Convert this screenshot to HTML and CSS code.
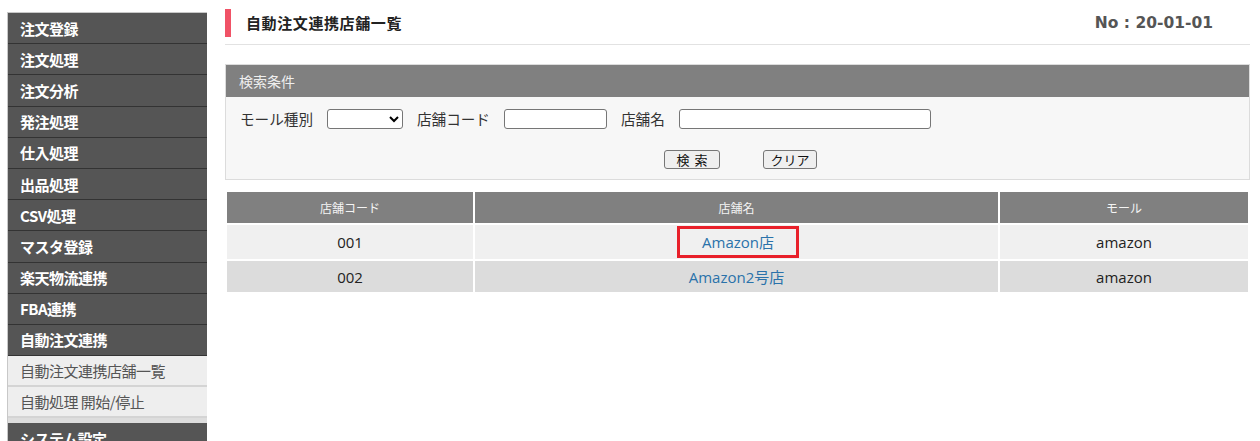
FILE: index.html
```html
<!DOCTYPE html>
<html lang="ja">
<head>
<meta charset="utf-8">
<title>自動注文連携店舗一覧</title>
<link rel="stylesheet" href="styles.css">
</head>
<body>
<div class="page">
  <nav class="sidebar">
    <div class="nav-item">注文登録</div>
    <div class="nav-item">注文処理</div>
    <div class="nav-item">注文分析</div>
    <div class="nav-item">発注処理</div>
    <div class="nav-item">仕入処理</div>
    <div class="nav-item">出品処理</div>
    <div class="nav-item">CSV処理</div>
    <div class="nav-item">マスタ登録</div>
    <div class="nav-item">楽天物流連携</div>
    <div class="nav-item">FBA連携</div>
    <div class="nav-item">自動注文連携</div>
    <div class="nav-sub">
      <div class="sub-item">自動注文連携店舗一覧</div>
      <div class="sub-item">自動処理 開始/停止</div>
    </div>
    <div class="nav-item">システム設定</div>
  </nav>

  <main class="main">
    <header class="page-head">
      <h1 class="page-title">自動注文連携店舗一覧</h1>
      <div class="page-no">No : 20-01-01</div>
    </header>

    <section class="search">
      <div class="search-head">検索条件</div>
      <div class="search-body">
        <div class="search-row">
          <label class="field-label">モール種別</label>
          <select class="mall-select"><option></option></select>
          <label class="field-label">店舗コード</label>
          <input class="text-input code-input" type="text">
          <label class="field-label">店舗名</label>
          <input class="text-input name-input" type="text">
        </div>
        <div class="button-row">
          <button class="btn btn-search">検 索</button>
          <button class="btn">クリア</button>
        </div>
      </div>
    </section>

    <table class="shop-table">
      <thead>
        <tr>
          <th class="col-code">店舗コード</th>
          <th class="col-name">店舗名</th>
          <th class="col-mall">モール</th>
        </tr>
      </thead>
      <tbody>
        <tr class="row-odd">
          <td>001</td>
          <td><a class="shop-link highlight" href="#">Amazon店</a></td>
          <td>amazon</td>
        </tr>
        <tr class="row-even">
          <td>002</td>
          <td><a class="shop-link" href="#">Amazon2号店</a></td>
          <td>amazon</td>
        </tr>
      </tbody>
    </table>
  </main>
</div>
</body>
</html>
```

FILE: styles.css
```css
* { box-sizing: border-box; }

html, body {
  margin: 0;
  padding: 0;
  background: #fff;
  font-family: "Open Sans", "Noto Sans CJK JP", sans-serif;
  color: #333;
}

.page {
  display: flex;
  align-items: flex-start;
  width: 1260px;
  height: 441px;
  overflow: hidden;
}

/* ---- side menu ---- */
.sidebar {
  width: 200px;
  margin: 12px 0 0 7px;
  flex: none;
  border-top: 1px solid #c8c8c8;
  border-left: 1px solid #c8c8c8;
}

.nav-item {
  height: 31.2px;
  padding-left: 12px;
  display: flex;
  align-items: center;
  background: #555;
  border-bottom: 1px solid #333;
  color: #fff;
  font-family: "Noto Sans CJK JP", sans-serif;
  font-weight: 700;
  font-size: 15px;
  letter-spacing: -0.5px;
}

.nav-sub {
  background: #ddd;
  padding-bottom: 5px;
}

.sub-item {
  height: 31px;
  padding-left: 12px;
  display: flex;
  align-items: center;
  background: #eee;
  border-bottom: 2px solid #d4d4d4;
  color: #555;
  font-family: "Noto Sans CJK JP", sans-serif;
  font-size: 15px;
  letter-spacing: -0.5px;
}

/* ---- main area ---- */
.main {
  margin-left: 18px;
  width: 1025px;
  flex: none;
}

.page-head {
  display: flex;
  align-items: center;
  justify-content: space-between;
  height: 45px;
  padding-top: 1px;
  border-bottom: 1px solid #e2e2e2;
}

.page-title {
  margin: 0;
  height: 28px;
  display: flex;
  align-items: center;
  border-left: 6px solid #f05266;
  padding-left: 15px;
  font-family: "Noto Sans CJK JP", sans-serif;
  font-size: 15px;
  font-weight: 700;
  color: #222;
  letter-spacing: 0.6px;
}

.page-no {
  margin-right: 37px;
  font-family: "DejaVu Sans", sans-serif;
  font-weight: 700;
  font-size: 15.5px;
  color: #555;
}

/* ---- search conditions ---- */
.search {
  margin-top: 19px;
  border: 1px solid #dcdcdc;
  background: #f7f7f7;
}

.search-head {
  height: 32px;
  padding-left: 13px;
  display: flex;
  align-items: center;
  background: #808080;
  color: #eee;
  font-family: "Noto Sans CJK JP", sans-serif;
  font-size: 14px;
}

.search-body {
  height: 82px;
  padding: 11px 0 0 14px;
}

.search-row {
  display: flex;
  align-items: center;
  gap: 14px;
  height: 21px;
}

.field-label {
  font-family: "Noto Sans CJK JP", sans-serif;
  font-size: 14.6px;
  color: #333;
}

.mall-select {
  width: 76px;
  height: 20px;
  border: 1px solid #767676;
  border-radius: 3px;
  background: #fff;
  font-size: 13px;
}

.text-input {
  height: 20px;
  border: 1px solid #767676;
  border-radius: 3px;
  background: #fff;
  padding: 0 3px;
}

.code-input { width: 103px; }
.name-input { width: 252px; }

.button-row {
  display: flex;
  justify-content: center;
  gap: 43px;
  margin-top: 21px;
  padding-right: 8px;
}

.btn {
  height: 19px;
  padding: 0 6px;
  border: 1px solid #767676;
  border-radius: 3px;
  background: #efefef;
  color: #111;
  font-family: "Noto Sans CJK JP", sans-serif;
  font-size: 13px;
  line-height: 17px;
}

.btn-search {
  width: 56px;
  letter-spacing: 1px;
}

/* ---- shop list ---- */
.shop-table {
  margin-top: 10px;
  border-collapse: separate;
  border-spacing: 2px;
  width: 1025px;
  table-layout: fixed;
}

.col-code { width: 246px; }
.col-name { width: 523px; }
.col-mall { width: 248px; }

.shop-table th {
  height: 31px;
  background: #808080;
  color: #f4f4f4;
  font-family: "Noto Sans CJK JP", sans-serif;
  font-size: 12px;
  font-weight: 400;
}

.shop-table td {
  height: 32px;
  text-align: center;
  font-size: 15px;
  color: #222;
}

.row-even td { height: 31px; }

.row-odd td { background: #f0f0f0; }
.row-even td { background: #dcdcdc; }

.shop-link {
  color: #2a72aa;
  text-decoration: none;
}

.highlight {
  display: inline-block;
  width: 122px;
  height: 32px;
  line-height: 26px;
  border: 3px solid #e8202a;
  margin-left: 3px;
}
```
